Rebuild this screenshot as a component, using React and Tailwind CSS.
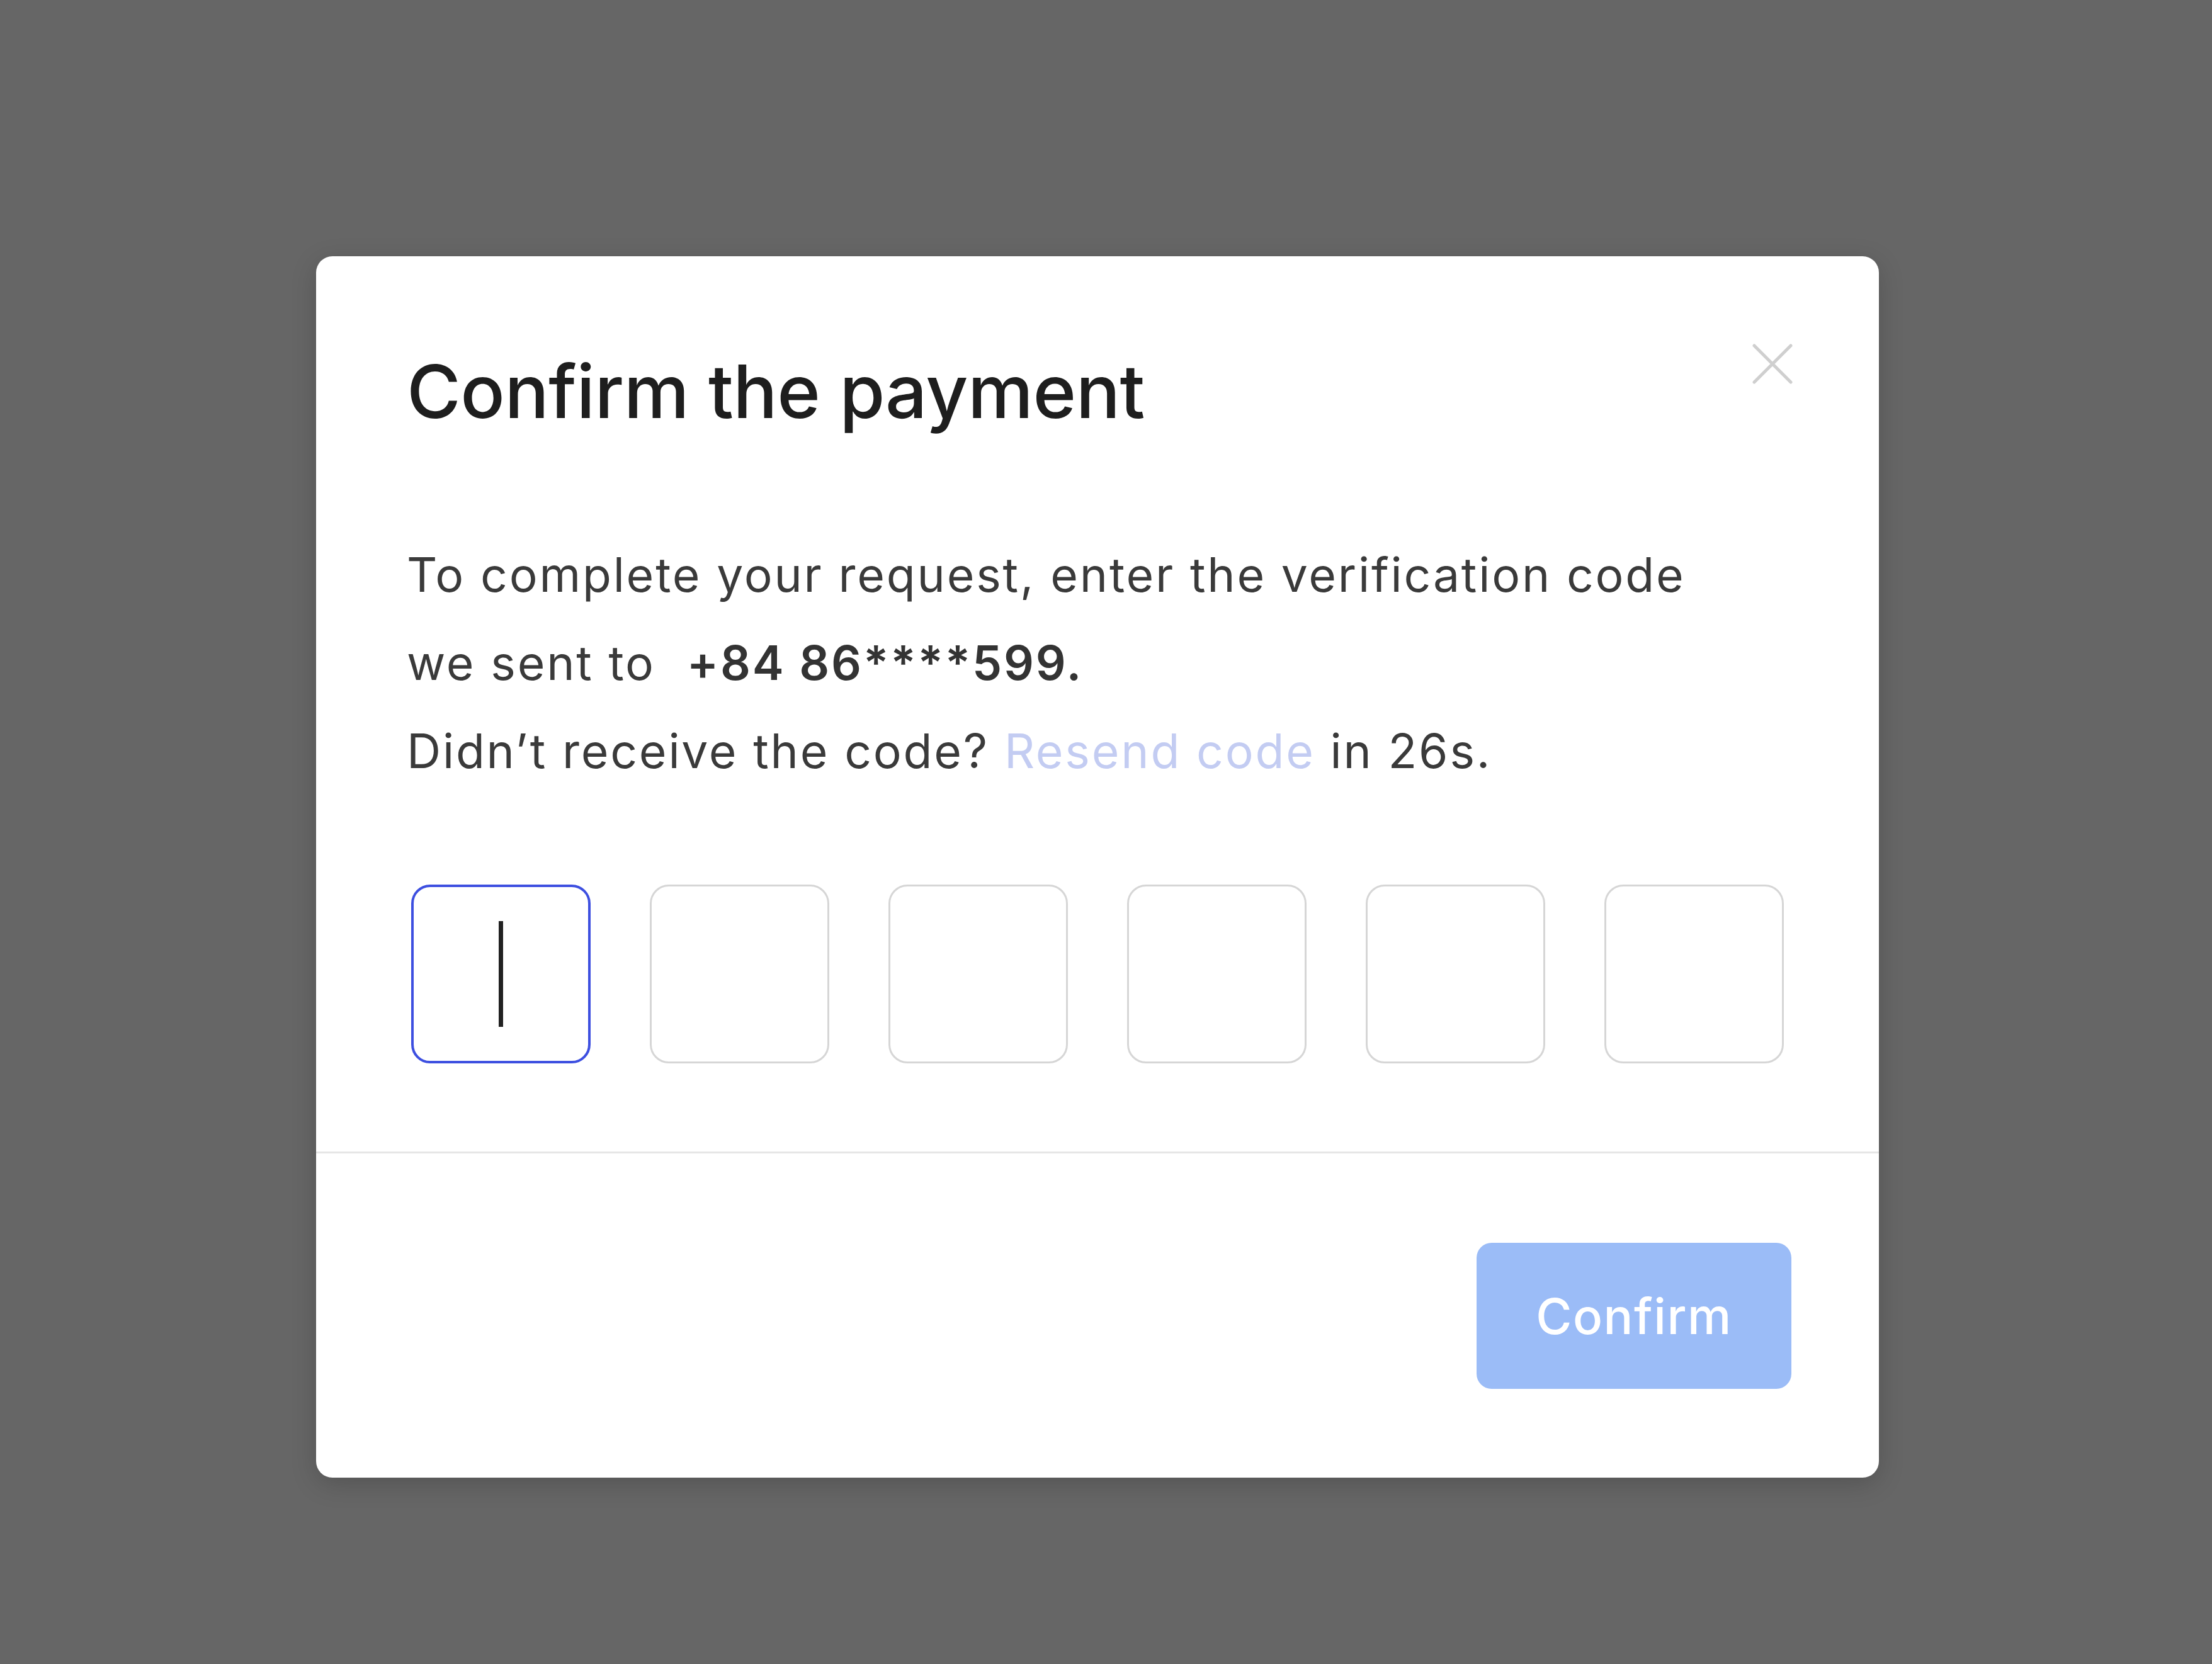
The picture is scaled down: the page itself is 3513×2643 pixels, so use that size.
import React from "react";

const font = { fontFamily: "Inter, 'Noto Sans', sans-serif" };

const CloseIcon = () => (
  <svg width="66" height="66" viewBox="0 0 66 66" fill="none">
    <path d="M4 4 L62 62 M62 4 L4 62" stroke="#cfcfcf" strokeWidth="5" strokeLinecap="round" />
  </svg>
);

const OtpBox = ({ active }) => (
  <div
    className={`w-[285px] h-[284px] rounded-[30px] flex items-center justify-center bg-white ${
      active ? "border-[4px] border-[#3d4fe0]" : "border-[3px] border-[#d6d6d6]"
    }`}
  >
    {active && <div className="w-[7px] h-[168px] bg-[#222]" />}
  </div>
);

const App = () => {
  return (
    <div className="w-full h-[2643px] bg-[#666666] pt-[407px] pl-[502px]" style={font}>
      <div className="w-[2482px] bg-white rounded-[26px] shadow-[0_10px_40px_rgba(0,0,0,0.18)]">
        {/* Body */}
        <div className="px-[144px] pt-[144px] pb-[140px]">
          <div className="flex items-start justify-between">
            <h1 className="text-[117px] leading-[142px] font-medium text-[#1e1e1e] tracking-[-0.5px]">
              Confirm the payment
            </h1>
            <button className="mt-[-6px] mr-[-8px]">
              <CloseIcon />
            </button>
          </div>

          <div className="mt-[150px] text-[75px] leading-[140px] tracking-[2.8px] text-[#3a3a3a]">
            <p>To complete your request, enter the verification code</p>
            <p>
              we sent to{" "}
              <span className="ml-[26px] font-semibold text-[#333]">+84 86****599.</span>
            </p>
            <p>
              Didn’t receive the code? <span className="text-[#c3ccf2]">Resend code</span> in 26s.
            </p>
          </div>

          <div className="mt-[142px] ml-[7px] flex items-center gap-[94px]">
            <OtpBox active />
            <OtpBox />
            <OtpBox />
            <OtpBox />
            <OtpBox />
            <OtpBox />
          </div>
        </div>

        {/* Footer */}
        <div className="border-t-[3px] border-[#e6e6e6] pr-[139px] pt-[142px] pb-[141px] flex justify-end">
          <button className="w-[500px] h-[232px] rounded-[24px] bg-[#9bbcf7] text-white text-[78px] tracking-[1.5px] font-medium">
            Confirm
          </button>
        </div>
      </div>
    </div>
  );
};

export default App;
